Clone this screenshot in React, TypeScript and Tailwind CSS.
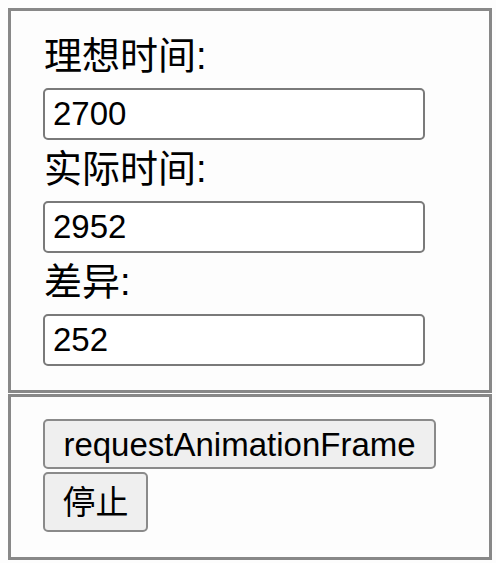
import React from "react";

const cjk = "font-['Liberation_Sans','Noto_Sans_CJK_SC',sans-serif]";

function Row({ label, value }: { label: string; value: string }) {
  return (
    <>
      <div className={`h-[61px] flex items-center text-[38px] leading-none text-black ${cjk} pl-[1px]`}>
        <span className="-mt-[4px]">{label}</span>
      </div>
      <input
        readOnly
        value={value}
        className={`block w-[382px] h-[52px] border-2 border-[#7a7a7a] rounded-[5px] bg-white px-[8px] text-[33px] text-black outline-none ${cjk}`}
      />
    </>
  );
}

export default function App() {
  return (
    <div className="w-[496px] h-[563px] bg-[#fdfdfd] pt-[8px] pl-[8px]">
      <div className="w-[484px] h-[385px] border-[3px] border-[#888888] pt-[16px] pl-[32px]">
        <Row label="理想时间:" value="2700" />
        <Row label="实际时间:" value="2952" />
        <Row label="差异:" value="252" />
      </div>
      <div className="mt-[1px] w-[484px] h-[166px] border-[3px] border-[#888888] pt-[22px] pl-[32px] flex flex-col items-start gap-[3px]">
        <button
          className={`h-[50px] w-[393px] flex items-center justify-center border-2 border-[#8a8a8a] rounded-[5px] bg-[#efefef] text-[33px] leading-none text-black ${cjk}`}
        >
          requestAnimationFrame
        </button>
        <button
          className={`h-[60px] w-[105px] flex items-center justify-center border-2 border-[#8a8a8a] rounded-[5px] bg-[#efefef] text-[33px] leading-none text-black ${cjk}`}
        >
          停止
        </button>
      </div>
    </div>
  );
}
